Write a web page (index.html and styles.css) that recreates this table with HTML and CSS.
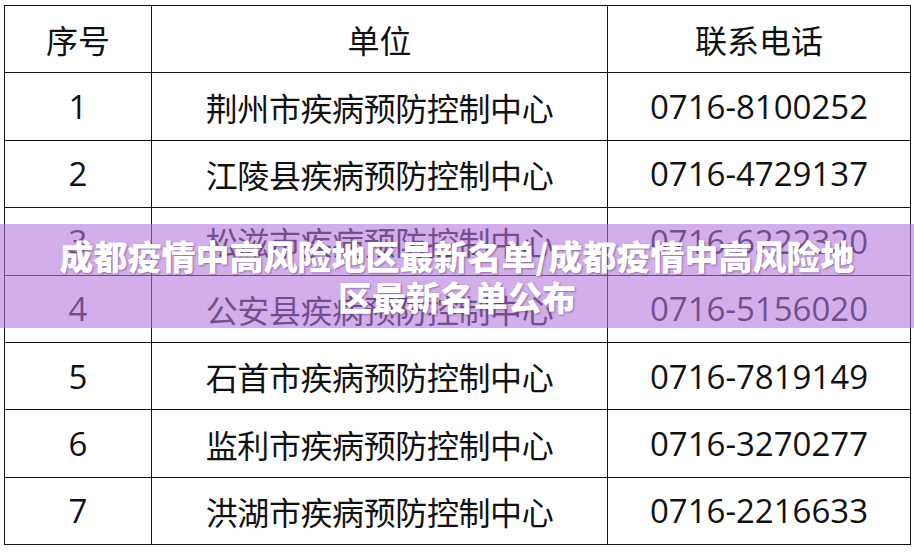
FILE: index.html
```html
<!DOCTYPE html>
<html lang="zh-CN">
<head>
<meta charset="utf-8">
<title>成都疫情中高风险地区最新名单</title>
<link rel="stylesheet" href="styles.css">
</head>
<body>
<div class="page">
  <table class="list">
    <colgroup>
      <col class="c-no">
      <col class="c-unit">
      <col class="c-tel">
    </colgroup>
    <thead>
      <tr><th>序号</th><th>单位</th><th>联系电话</th></tr>
    </thead>
    <tbody>
      <tr><td class="num">1</td><td>荆州市疾病预防控制中心</td><td class="num">0716-8100252</td></tr>
      <tr><td class="num">2</td><td>江陵县疾病预防控制中心</td><td class="num">0716-4729137</td></tr>
      <tr><td class="num">3</td><td>松滋市疾病预防控制中心</td><td class="num">0716-6222320</td></tr>
      <tr><td class="num">4</td><td>公安县疾病预防控制中心</td><td class="num">0716-5156020</td></tr>
      <tr><td class="num">5</td><td>石首市疾病预防控制中心</td><td class="num">0716-7819149</td></tr>
      <tr><td class="num">6</td><td>监利市疾病预防控制中心</td><td class="num">0716-3270277</td></tr>
      <tr><td class="num">7</td><td>洪湖市疾病预防控制中心</td><td class="num">0716-2216633</td></tr>
    </tbody>
  </table>
  <div class="banner">
    <h1 class="banner-title">成都疫情中高风险地区最新名单/成都疫情中高风险地区最新名单公布</h1>
  </div>
</div>
</body>
</html>
```

FILE: styles.css
```css
html, body {
  margin: 0;
  padding: 0;
  background: #ffffff;
}

.page {
  position: relative;
  width: 914px;
  height: 552px;
  overflow: hidden;
  padding-top: 5px;
  box-sizing: border-box;
}

.list {
  margin: 0 0 0 4px;
  width: 906px;
  border-collapse: collapse;
  table-layout: fixed;
  color: #111111;
  font-family: "Noto Sans CJK SC", "Open Sans", sans-serif;
  font-size: 32px;
}

.c-no { width: 147px; }
.c-unit { width: 456px; }
.c-tel { width: 303px; }

.list th,
.list td {
  border: 1px solid #111111;
  height: 67.4px;
  padding: 0;
  text-align: center;
  vertical-align: middle;
  font-weight: 400;
  line-height: 1;
  box-sizing: border-box;
}

.list td {
  letter-spacing: -0.4px;
}

.list td.num {
  font-family: "Open Sans", "Noto Sans CJK SC", sans-serif;
  font-size: 33px;
  letter-spacing: 0;
}

.banner {
  position: absolute;
  left: 0;
  top: 224px;
  width: 914px;
  height: 104px;
  background: rgba(180, 120, 222, 0.6);
  display: flex;
  align-items: center;
  justify-content: center;
  padding: 0 50px;
  box-sizing: border-box;
}

.banner-title {
  margin: 0;
  max-width: 812px;
  color: #ffffff;
  font-family: "Noto Sans CJK SC", sans-serif;
  font-weight: 900;
  font-size: 34px;
  line-height: 41px;
  text-align: center;
  text-shadow: 1px 1px 2px rgba(60, 30, 80, 0.45);
}
```
